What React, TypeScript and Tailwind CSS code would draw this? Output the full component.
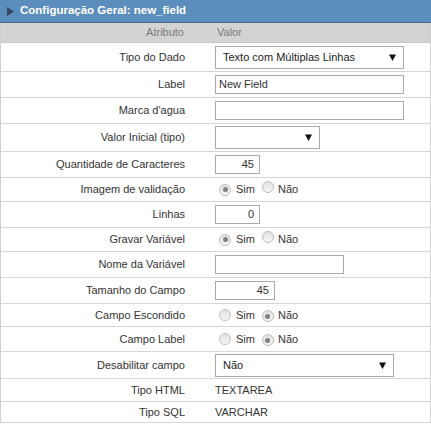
import React from "react";

const font = { fontFamily: '"Liberation Sans", Arial, sans-serif' };

function Radio({ checked }: { checked?: boolean }) {
  return (
    <span className="inline-flex h-[12px] w-[12px] items-center justify-center rounded-full border border-[#bdbdbd] bg-gradient-to-b from-[#e2e2e2] to-[#f6f6f6]">
      {checked ? <span className="h-[5px] w-[5px] rounded-full bg-[#808080]" /> : null}
    </span>
  );
}

function RadioPair({ sim }: { sim: boolean }) {
  return (
    <div className="flex items-center pl-[4px] text-[11px] text-[#333]">
      <Radio checked={sim} />
      <span className="ml-[5px]">Sim</span>
      <span className="ml-[7px]"><Radio checked={!sim} /></span>
      <span className="ml-[4px]">Não</span>
    </div>
  );
}

function Select({ w, text }: { w: number; text?: string }) {
  return (
    <div
      className="flex h-[23px] items-center justify-between border border-[#a9a9a9] bg-white pl-[7px] pr-[7px] text-[11px] text-[#222]"
      style={{ width: w }}
    >
      <span>{text ?? ""}</span>
      <svg width="7" height="7" viewBox="0 0 7 7">
        <path d="M0 0.5 H7 L3.5 7 Z" fill="#111" />
      </svg>
    </div>
  );
}

function Input({ w, text, right }: { w: number; text?: string; right?: boolean }) {
  return (
    <div
      className={
        "flex h-[19px] items-center border border-[#a9a9a9] bg-white text-[11px] text-[#333] " +
        (right ? "justify-end pr-[5px]" : "pl-[3px]")
      }
      style={{ width: w }}
    >
      {text ?? ""}
    </div>
  );
}

type Row = { label: string; h: number; value: React.ReactNode };

const rows: Row[] = [
  { label: "Tipo do Dado", h: 29, value: <Select w={189} text="Texto com Múltiplas Linhas" /> },
  { label: "Label", h: 26, value: <Input w={189} text="New Field" /> },
  { label: "Marca d'agua", h: 26, value: <Input w={189} /> },
  { label: "Valor Inicial (tipo)", h: 28, value: <Select w={105} /> },
  { label: "Quantidade de Caracteres", h: 26, value: <Input w={45} text="45" right /> },
  { label: "Imagem de validação", h: 24, value: <RadioPair sim={true} /> },
  { label: "Linhas", h: 26, value: <Input w={45} text="0" right /> },
  { label: "Gravar Variável", h: 24, value: <RadioPair sim={true} /> },
  { label: "Nome da Variável", h: 26, value: <Input w={129} /> },
  { label: "Tamanho do Campo", h: 26, value: <Input w={60} text="45" right /> },
  { label: "Campo Escondido", h: 23, value: <RadioPair sim={false} /> },
  { label: "Campo Label", h: 25, value: <RadioPair sim={false} /> },
  { label: "Desabilitar campo", h: 27, value: <Select w={179} text="Não" /> },
  { label: "Tipo HTML", h: 23, value: <span className="text-[11px] text-[#333]">TEXTAREA</span> },
  { label: "Tipo SQL", h: 21, value: <span className="text-[11px] text-[#333]">VARCHAR</span> },
];

export default function App() {
  return (
    <div className="h-[432px] w-[431px] bg-white" style={font}>
      <div className="flex h-[23px] items-center border-b border-[#46698a] bg-[#5b8dbd] pl-[7px]">
        <svg width="7" height="9" viewBox="0 0 7 9">
          <path d="M0 0 L7 4.5 L0 9 Z" fill="#34495e" />
        </svg>
        <span className="ml-[6px] text-[11.5px] font-bold text-white">Configuração Geral: new_field</span>
      </div>
      <div className="border-x border-[#d0d0d0]">
        <div className="grid h-[20px] grid-cols-[206px_1fr] items-center border-b border-[#c8c8c8] bg-[#d3d3d3] text-[11px] text-[#7b7b7b]">
          <div className="pr-[23px] text-right">Atributo</div>
          <div className="pl-[10px]">Valor</div>
        </div>
        {rows.map((r) => (
          <div
            key={r.label}
            className="grid grid-cols-[206px_1fr] items-center border-b border-[#d6d6d6] text-[11px] text-[#333]"
            style={{ height: r.h }}
          >
            <div className="pr-[22px] text-right">{r.label}</div>
            <div className="flex items-center pl-[8px]">{r.value}</div>
          </div>
        ))}
      </div>
    </div>
  );
}
